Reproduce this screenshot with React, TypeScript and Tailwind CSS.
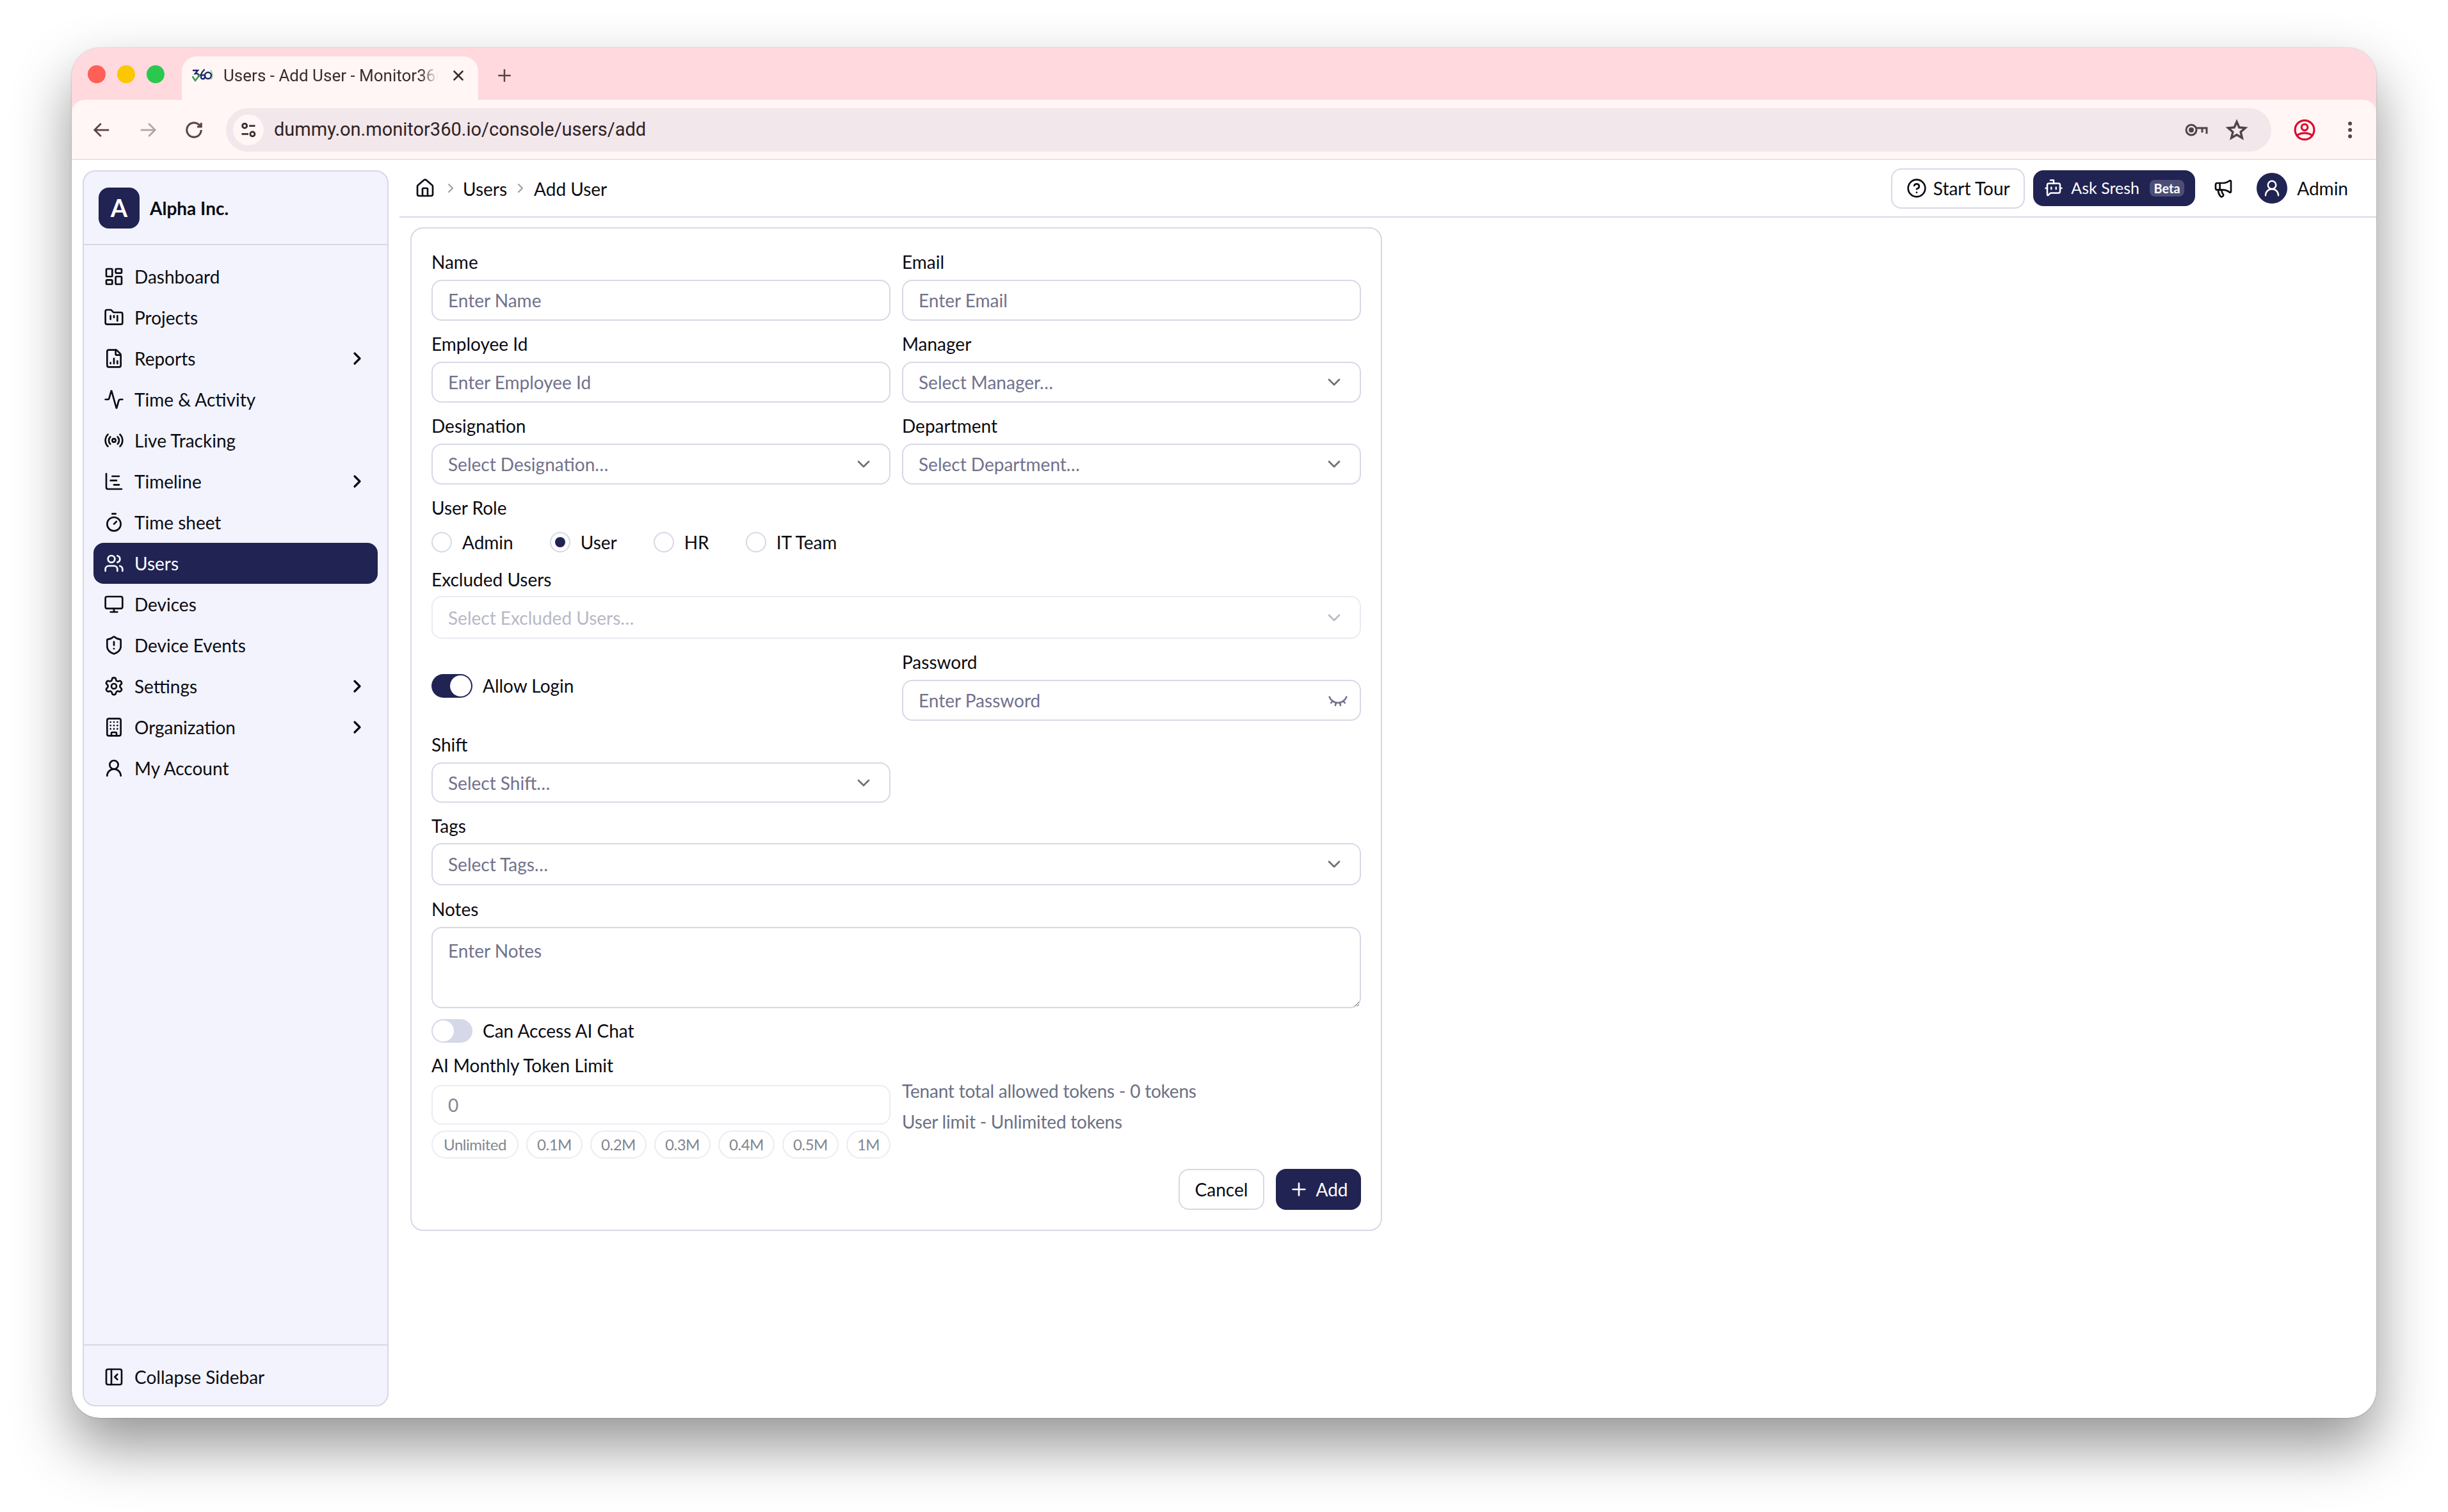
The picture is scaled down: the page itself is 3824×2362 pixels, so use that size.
import React from 'react';
import {
  Activity, BotMessageSquare, Building, ChartGantt, ChevronDown, ChevronRight, CircleHelp, EyeClosed,
  FileChartColumn, FolderKanban, House, LayoutDashboard, Megaphone, Monitor, PanelLeftClose, Plus, Radio,
  Settings, ShieldAlert, Timer, UserRound, Users, X,
} from 'lucide-react';

const navItems = [
  { label: 'Dashboard', icon: LayoutDashboard },
  { label: 'Projects', icon: FolderKanban },
  { label: 'Reports', icon: FileChartColumn, more: true },
  { label: 'Time & Activity', icon: Activity },
  { label: 'Live Tracking', icon: Radio },
  { label: 'Timeline', icon: ChartGantt, more: true },
  { label: 'Time sheet', icon: Timer },
  { label: 'Users', icon: Users, active: true },
  { label: 'Devices', icon: Monitor },
  { label: 'Device Events', icon: ShieldAlert },
  { label: 'Settings', icon: Settings, more: true },
  { label: 'Organization', icon: Building, more: true },
  { label: 'My Account', icon: UserRound },
];

const roles = ['Admin', 'User', 'HR', 'IT Team'];
const chips = [
  { label: 'Unlimited', w: 'w-[136px]' },
  { label: '0.1M', w: 'w-[88px]' },
  { label: '0.2M', w: 'w-[88px]' },
  { label: '0.3M', w: 'w-[88px]' },
  { label: '0.4M', w: 'w-[88px]' },
  { label: '0.5M', w: 'w-[88px]' },
  { label: '1M', w: 'w-[69px]' },
];

const inputClass =
  'w-full rounded-2xl border-2 border-[#d7d8e6] bg-white px-6 text-[28px] text-[#0b0b12] outline-none placeholder:text-[#71718c]';

function Label({ text, h = 'h-[56px]' }: { text: string; h?: string }) {
  return <div className={`flex items-center text-[28px] leading-none text-[#0b0b12] ${h}`}>{text}</div>;
}

function SelectBox({ text, h = 'h-[64px]', disabled }: { text: string; h?: string; disabled?: boolean }) {
  return (
    <div
      className={`flex w-full items-center justify-between rounded-2xl border-2 bg-white pl-6 pr-[24px] text-[28px] ${h} ${
        disabled ? 'border-[#ebebf3] text-[#b8b8c6]' : 'border-[#d7d8e6] text-[#71718c]'
      }`}
    >
      <span>{text}</span>
      <ChevronDown size={32} strokeWidth={2} className={disabled ? 'text-[#b8b8c6]' : 'text-[#6f6f78]'} />
    </div>
  );
}

function Toggle({ on, label }: { on?: boolean; label: string }) {
  return (
    <div className="flex items-center gap-4">
      <div className={`flex h-[37px] w-[64px] items-center rounded-full px-[2px] ${on ? 'justify-end bg-[#212352]' : 'justify-start bg-[#d5d8e8]'}`}>
        <div className="h-[33px] w-[33px] rounded-full bg-white" />
      </div>
      <span className="text-[28px] leading-none text-[#0b0b12]">{label}</span>
    </div>
  );
}

function Favicon() {
  return (
    <svg width="34" height="22" viewBox="0 0 34 22" fill="none" strokeWidth="2.4" strokeLinecap="round">
      <path d="M2 3h7l-4 5c4-.5 6 1.500 5.500 4.500" stroke="#1d2a6b" />
      <path d="M1 13l4 6 7-9" stroke="#2f9e44" />
      <path d="M19 2c-3 3-6 8-5 12 .8 3 5 3 6 0s-2-5-5-3" stroke="#1d2a6b" />
      <circle cx="25" cy="11" r="5" stroke="#1d2a6b" />
      <path d="M29 3c3 3 4 9 1 14" stroke="#7ac98f" strokeWidth="1.400" />
    </svg>
  );
}

function BrowserChrome() {
  return (
    <div className="bg-[#ffd9de]">
      <div className="flex h-[81px] items-end pl-[25px]">
        <div className="flex h-[81px] items-center gap-[18px]">
          <div className="h-[28px] w-[28px] rounded-full bg-[#ff5f57]" />
          <div className="h-[28px] w-[28px] rounded-full bg-[#fbc700]" />
          <div className="h-[28px] w-[28px] rounded-full bg-[#2ac84f]" />
        </div>
        <div className="ml-[27px] flex h-[68px] w-[463px] items-center rounded-t-[24px] bg-[#fff6f5] pl-[16px] pb-[8px]">
          <Favicon />
          <span className="ml-[15px] w-[335px] overflow-hidden whitespace-nowrap font-['Roboto',sans-serif] text-[26px] text-[#3b2c2f] [mask-image:linear-gradient(to_right,black_92%,transparent)]">
            Users - Add User - Monitor360
          </span>
          <X size={26} strokeWidth={2.4} className="ml-[19px] text-[#3b2c2f]" />
        </div>
        <Plus size={30} strokeWidth={2} className="mb-[23px] ml-[26px] text-[#5b4347]" />
      </div>
      <div className="flex h-[94px] items-center rounded-t-[20px] border-b-2 border-[#f6dfe1] bg-[#fff6f5] pl-[32px] pr-[34px] pt-[2px] text-[#5b4347]">
        <svg width="30" height="30" viewBox="0 0 24 24" fill="none" stroke="currentColor" strokeWidth="2.200">
          <path d="M21 12H3M11 4l-8 8 8 8" />
        </svg>
        <svg width="30" height="30" viewBox="0 0 24 24" fill="none" stroke="#b3a5a7" strokeWidth="2.200" className="ml-[42px]">
          <path d="M3 12h18M13 4l8 8-8 8" />
        </svg>
        <svg width="30" height="30" viewBox="0 0 24 24" fill="none" stroke="currentColor" strokeWidth="2.400" className="ml-[42px]">
          <path d="M21 12a9 9 0 1 1-9-9c2.520 0 4.930 1 6.740 2.740L21 8" />
          <path d="M21 3v5h-5" />
        </svg>
        <div className="ml-[35px] flex h-[68px] flex-1 items-center rounded-full bg-[#f2e7ea] pl-[11px] pr-[37px]">
          <div className="flex h-[48px] w-[48px] items-center justify-center rounded-full bg-[#fff6f5]">
            <svg width="28" height="28" viewBox="0 0 24 24" fill="none" stroke="#3b2c2f" strokeWidth="2.400">
              <circle cx="7" cy="6.500" r="3" />
              <path d="M13 6.500h8M3 17.500h9" />
              <circle cx="17.500" cy="17.500" r="3" />
            </svg>
          </div>
          <span className="ml-[16px] flex-1 font-['Roboto',sans-serif] text-[29px] text-[#2f2225]">
            dummy.on.monitor360.io/console/users/add
          </span>
          <svg width="36" height="20" viewBox="0 0 36 20" fill="none" stroke="#514447" strokeWidth="3">
            <circle cx="10" cy="10" r="8" />
            <circle cx="10" cy="10" r="2.500" fill="#514447" />
            <path d="M18 7h16v9M27 7v7" />
          </svg>
          <svg width="34" height="34" viewBox="0 0 24 24" fill="none" stroke="#514447" strokeWidth="2.400" className="ml-[28px]">
            <path d="M12 3l2.700 6.200 6.700.6-5.100 4.400 1.600 6.600L12 17.300l-5.900 3.500 1.600-6.600-5.100-4.400 6.700-.6z" />
          </svg>
        </div>
        <svg width="34" height="34" viewBox="0 0 32 32" fill="none" stroke="#dc0a2d" strokeWidth="3" className="ml-[35px]">
          <circle cx="16" cy="16" r="14" />
          <circle cx="16" cy="12" r="4.500" />
          <path d="M5 24c6-4.500 16-4.500 22 0" />
        </svg>
        <div className="ml-[51px] mr-[4px] flex flex-col gap-[4px]">
          <div className="h-[6px] w-[6px] rounded-full bg-[#5b4347]" />
          <div className="h-[6px] w-[6px] rounded-full bg-[#5b4347]" />
          <div className="h-[6px] w-[6px] rounded-full bg-[#5b4347]" />
        </div>
      </div>
    </div>
  );
}

function Sidebar() {
  return (
    <aside className="ml-[17px] mt-[16px] mb-[18px] flex w-[478px] shrink-0 flex-col rounded-[20px] border-2 border-[#d7d8e6] bg-[#f2f3fc]">
      <div className="flex h-[115px] items-center gap-4 border-b-2 border-[#d7d8e6] pl-[23px]">
        <div className="flex h-[64px] w-[64px] items-center justify-center rounded-2xl bg-[#212352] text-[38px] font-bold text-white">A</div>
        <span className="text-[28px] font-bold text-[#0b0b12]">Alpha Inc.</span>
      </div>
      <nav className="flex flex-1 flex-col px-[15px] pt-[17px]">
        {navItems.map((item) => {
          const Icon = item.icon;
          return (
            <div
              key={item.label}
              className={`flex h-[64px] shrink-0 items-center gap-[16px] rounded-2xl pl-[16px] pr-[16px] text-[28px] ${
                item.active ? 'bg-[#212352] text-white' : 'text-[#0b0b12]'
              }`}
            >
              <Icon size={32} strokeWidth={2} />
              <span className="flex-1">{item.label}</span>
              {item.more && <ChevronRight size={32} strokeWidth={2.400} />}
            </div>
          );
        })}
      </nav>
      <div className="flex h-[95px] items-center gap-4 border-t-2 border-[#d7d8e6] pl-[31px] pt-[4px] text-[28px] text-[#0b0b12]">
        <PanelLeftClose size={32} strokeWidth={2} />
        <span>Collapse Sidebar</span>
      </div>
    </aside>
  );
}

function TopBar() {
  return (
    <div className="flex h-[90px] items-center border-b-2 border-[#d7d8e6] pr-[44px] text-[28px] text-[#0b0b12]">
      <House size={32} strokeWidth={2} className="ml-[24px]" />
      <ChevronRight size={24} strokeWidth={2} className="ml-[12px] text-[#9a9aa8]" />
      <span className="ml-[7px] pt-[2px]">Users</span>
      <ChevronRight size={24} strokeWidth={2} className="ml-[9px] text-[#9a9aa8]" />
      <span className="ml-[9px] pt-[2px]">Add User</span>
      <div className="ml-auto flex h-[63px] w-[209px] items-center justify-center gap-[10px] rounded-2xl border-2 border-[#d7d8e6] bg-white">
        <CircleHelp size={32} strokeWidth={2} />
        <span>Start Tour</span>
      </div>
      <div className="ml-[13px] flex h-[56px] w-[253px] items-center rounded-2xl bg-[#212352] pl-[17px] text-[25px] text-white">
        <BotMessageSquare size={30} strokeWidth={2} />
        <span className="ml-[12px]">Ask Sresh</span>
        <span className="ml-[16px] flex h-[26px] w-[54px] items-center justify-center rounded-lg bg-[#4c4e76] text-[20px] font-bold">Beta</span>
      </div>
      <Megaphone size={32} strokeWidth={2} className="ml-[28px]" />
      <div className="ml-[36px] flex h-[48px] w-[48px] items-center justify-center rounded-full bg-[#212352] text-white">
        <UserRound size={30} strokeWidth={2} />
      </div>
      <span className="ml-[15px]">Admin</span>
    </div>
  );
}

function UserForm() {
  return (
    <div className="mt-[15px] ml-[17px] flex w-[1518px] flex-col gap-[8px] rounded-[20px] border-2 border-[#d7d8e6] bg-white px-[31px] pt-[24px] pb-[31px]">
      <div className="grid grid-cols-2 gap-x-[18px]">
        <div>
          <Label text="Name" />
          <input placeholder="Enter Name" className={`${inputClass} h-[64px]`} />
        </div>
        <div>
          <Label text="Email" />
          <input placeholder="Enter Email" className={`${inputClass} h-[64px]`} />
        </div>
      </div>
      <div className="grid grid-cols-2 gap-x-[18px]">
        <div>
          <Label text="Employee Id" />
          <input placeholder="Enter Employee Id" className={`${inputClass} h-[64px]`} />
        </div>
        <div>
          <Label text="Manager" />
          <SelectBox text="Select Manager…" />
        </div>
      </div>
      <div className="grid grid-cols-2 gap-x-[18px]">
        <div>
          <Label text="Designation" />
          <SelectBox text="Select Designation…" />
        </div>
        <div>
          <Label text="Department" />
          <SelectBox text="Select Department…" />
        </div>
      </div>
      <div>
        <Label text="User Role" />
        <div className="flex h-[52px] items-center gap-[57px]">
          {roles.map((role) => (
            <div key={role} className="flex items-center gap-4 text-[28px] text-[#0b0b12]">
              <div className="flex h-[32px] w-[32px] items-center justify-center rounded-full border-2 border-[#d7d8e6] bg-white">
                {role === 'User' && <div className="h-[16px] w-[16px] rounded-full bg-[#212352]" />}
              </div>
              <span className="leading-none">{role}</span>
            </div>
          ))}
        </div>
      </div>
      <div>
        <Label text="Excluded Users" h="h-[50px] pb-[2px]" />
        <SelectBox text="Select Excluded Users…" h="h-[67px]" disabled />
      </div>
      <div className="grid grid-cols-2 gap-x-[18px]">
        <div className="flex items-center pt-[10px]">
          <Toggle on label="Allow Login" />
        </div>
        <div>
          <Label text="Password" />
          <div className="flex h-[64px] items-center justify-between rounded-2xl border-2 border-[#d7d8e6] bg-white pl-6 pr-[18px] text-[28px] text-[#71718c]">
            <span>Enter Password</span>
            <EyeClosed size={32} strokeWidth={2} />
          </div>
        </div>
      </div>
      <div className="grid grid-cols-2 gap-x-[18px]">
        <div>
          <Label text="Shift" h="h-[57px]" />
          <SelectBox text="Select Shift…" h="h-[63px]" />
        </div>
      </div>
      <div>
        <Label text="Tags" h="h-[55px]" />
        <SelectBox text="Select Tags…" h="h-[66px]" />
      </div>
      <div>
        <Label text="Notes" h="h-[57px]" />
        <textarea placeholder="Enter Notes" className={`${inputClass} block h-[127px] py-[15px] leading-[40px]`} />
      </div>
      <div className="flex h-[54px] items-center">
        <Toggle label="Can Access AI Chat" />
      </div>
      <div>
        <Label text="AI Monthly Token Limit" h="h-[50px] pb-[12px]" />
        <div className="grid grid-cols-2 gap-x-[18px]">
          <div>
            <input
              disabled
              value="0"
              readOnly
              className="h-[62px] w-full rounded-2xl border-2 border-[#ebebf3] bg-white px-6 text-[28px] text-[#85858f] outline-none"
            />
            <div className="mt-[9px] flex gap-[12px]">
              {chips.map((chip) => (
                <div key={chip.label} className={`flex h-[44px] items-center justify-center rounded-full border-2 border-[#ebebf3] text-[24px] tracking-[-0.5px] text-[#85858f] ${chip.w}`}>
                  {chip.label}
                </div>
              ))}
            </div>
          </div>
          <div className="-mt-[2px] flex flex-col gap-[26px] text-[28px] leading-[22px] tracking-[-0.2px] text-[#6b7084]">
            <span>Tenant total allowed tokens - 0 tokens</span>
            <span>User limit - Unlimited tokens</span>
          </div>
        </div>
      </div>
      <div className="mt-[8px] flex justify-end gap-[18px] text-[28px]">
        <div className="flex h-[64px] w-[134px] items-center justify-center rounded-2xl border-2 border-[#d7d8e6] bg-white text-[#0b0b12]">Cancel</div>
        <div className="flex h-[64px] w-[133px] items-center justify-center gap-[10px] rounded-2xl bg-[#212352] text-white">
          <Plus size={32} strokeWidth={2} />
          <span>Add</span>
        </div>
      </div>
    </div>
  );
}

export default function App() {
  return (
    <div className="h-[2362px] overflow-hidden bg-white pl-[112px] pt-[75px] font-['Lato',sans-serif]">
      <div className="flex h-[2140px] w-[3600px] flex-col overflow-hidden rounded-[44px] bg-white shadow-[0_44px_90px_rgba(0,0,0,0.42),0_0_2px_rgba(0,0,0,0.35)]">
        <BrowserChrome />
        <div className="flex min-h-0 flex-1">
          <Sidebar />
          <main className="ml-[17px] flex-1">
            <TopBar />
            <UserForm />
          </main>
        </div>
      </div>
    </div>
  );
}
